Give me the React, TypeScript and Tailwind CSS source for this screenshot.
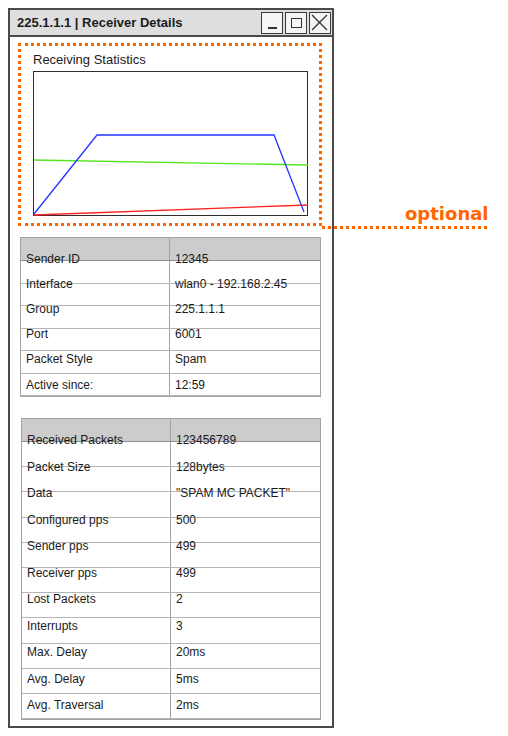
import React from 'react';

type Row = { label: string; value: string };

const senderRows: Row[] = [
    { label: 'Sender ID', value: '12345' },
    { label: 'Interface', value: 'wlan0 - 192.168.2.45' },
    { label: 'Group', value: '225.1.1.1' },
    { label: 'Port', value: '6001' },
    { label: 'Packet Style', value: 'Spam' },
    { label: 'Active since:', value: '12:59' },
];

const packetRows: Row[] = [
    { label: 'Received Packets', value: '123456789' },
    { label: 'Packet Size', value: '128bytes' },
    { label: 'Data', value: '"SPAM MC PACKET"' },
    { label: 'Configured pps', value: '500' },
    { label: 'Sender pps', value: '499' },
    { label: 'Receiver pps', value: '499' },
    { label: 'Lost Packets', value: '2' },
    { label: 'Interrupts', value: '3' },
    { label: 'Max. Delay', value: '20ms' },
    { label: 'Avg. Delay', value: '5ms' },
    { label: 'Avg. Traversal', value: '2ms' },
];

// Balsamiq-style grid: the text sits a little off the drawn rows, like the mockup
const DataGrid: React.FC<{ rows: Row[]; rowH: string; textH: string; width: string }> = ({ rows, rowH, textH, width }) => (
    <div className={`relative border border-[#a3a3a3] ${width}`}>
        <div className="h-[23px] bg-[#cccccc] border-b border-[#8f8f8f] flex">
            <div className="w-[149px] border-r border-[#a3a3a3]"></div>
        </div>
        {rows.map(r => (
            <div key={r.label} className={`${rowH} border-b border-[#b5b5b5] last:border-b-0 flex`}>
                <div className="w-[149px] border-r border-[#a3a3a3]"></div>
            </div>
        ))}
        <div className="absolute left-0 right-0 top-[8px] flex flex-col">
            {rows.map(r => (
                <div key={r.label} className={`${textH} flex items-center text-[12px] text-[#1a1a1a]`}>
                    <span className="w-[150px] pl-[5px]">{r.label}</span>
                    <span className="pl-[4px]">{r.value}</span>
                </div>
            ))}
        </div>
    </div>
);

export default function App() {
    return (
        <div className="min-h-screen bg-white relative pl-2 pt-2 font-['Liberation_Sans',Arial,sans-serif]">
            <div className="w-[326px] h-[720px] border-2 border-[#4a4a4a] flex flex-col">
                <div className="h-[27px] bg-[#dedede] border-b-2 border-[#4a4a4a] flex items-center pl-[7px] pr-[1px]">
                    <span className="font-bold text-[13px] text-[#1c1c1c] flex-1">225.1.1.1 | Receiver Details</span>
                    <div className="flex gap-[2px]">
                        <div className="w-[22px] h-[22px] border-[1.5px] border-[#3a3a3a] bg-[#f5f5f5] flex items-end justify-center pb-[4px]">
                            <div className="w-[9px] h-[1.5px] bg-[#333]"></div>
                        </div>
                        <div className="w-[22px] h-[22px] border-[1.5px] border-[#3a3a3a] bg-[#f5f5f5] flex items-center justify-center">
                            <div className="w-[11px] h-[10px] border-[1.5px] border-[#333]"></div>
                        </div>
                        <div className="w-[22px] h-[22px] border-[1.5px] border-[#3a3a3a] bg-[#f5f5f5]">
                            <svg width="19" height="19" viewBox="0 0 19 19">
                                <path d="M2 2 L17 17 M17 2 L2 17" stroke="#333" strokeWidth="1.3" fill="none" />
                            </svg>
                        </div>
                    </div>
                </div>

                <div className="ml-[8px] mt-[6px] w-[304px] h-[183px] border-[3px] border-dotted border-[#ff6600] flex flex-col pl-[12px] pt-[5px]">
                    <span className="text-[13px] text-[#1c1c1c] leading-[17px]">Receiving Statistics</span>
                    <div className="mt-[3px] w-[275px] h-[145px] border-[1.5px] border-[#2e2e2e]">
                        <svg width="272" height="142" viewBox="0 0 272 142" className="overflow-visible">
                            <polyline points="0,88 274,93" stroke="#55e620" strokeWidth="1.3" fill="none" />
                            <polyline points="0,143 274,133" stroke="#ff2020" strokeWidth="1.3" fill="none" />
                            <polyline points="0,142 63,63 240,63 270,140" stroke="#2336ff" strokeWidth="1.3" fill="none" />
                        </svg>
                    </div>
                </div>

                <div className="ml-[10px] mt-[11px]">
                    <DataGrid rows={senderRows} rowH="h-[22.5px]" textH="h-[25.2px]" width="w-[301px]" />
                </div>
                <div className="ml-[11px] mt-[21px]">
                    <DataGrid rows={packetRows} rowH="h-[25.2px]" textH="h-[26.5px]" width="w-[300px]" />
                </div>
            </div>

            <div className="absolute left-[322px] top-[226px] w-[165px] border-t-[3px] border-dotted border-[#ff6600]"></div>
            <span className="absolute left-[405px] top-[205px] leading-[18px] text-[18px] font-bold text-[#ff6600] font-['DejaVu_Sans',sans-serif]">optional</span>
        </div>
    );
}
